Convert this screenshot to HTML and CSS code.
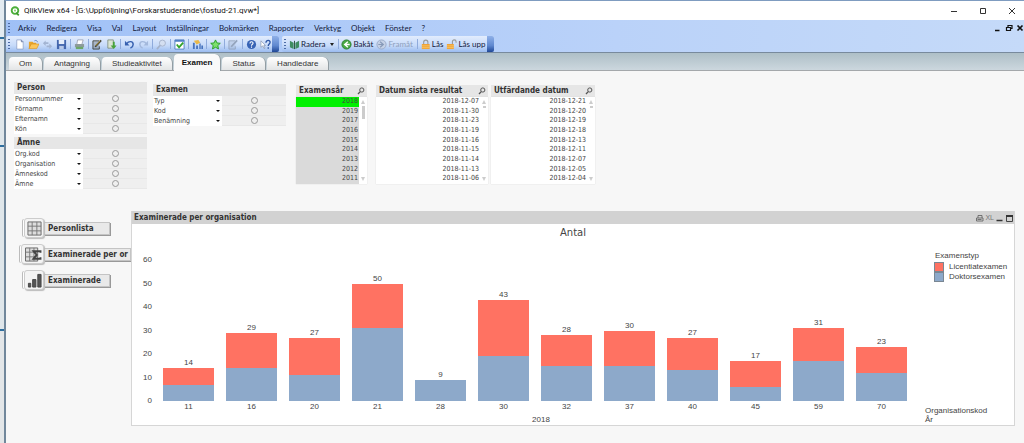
FILE: index.html
```html
<!DOCTYPE html>
<html lang="sv">
<head>
<meta charset="utf-8">
<title>QlikView x64</title>
<link rel="stylesheet" href="styles.css">
</head>
<body>
<svg class="defs" aria-hidden="true">
  <symbol id="mag" viewBox="0 0 8 8"><circle cx="4.8" cy="3" r="2.1" fill="none" stroke="#555" stroke-width="1"/><path d="M3.3 4.6L1 7" stroke="#555" stroke-width="1.3"/></symbol>
  <symbol id="sheet" viewBox="0 0 12 12"><path d="M3 1h5l2 2v8H3z" fill="#fff" stroke="#8a9cc4" stroke-width=".8"/><path d="M8 1v2h2" fill="#dbe4f5" stroke="#4f6396" stroke-width=".8"/></symbol>
  <symbol id="pencil" viewBox="0 0 12 12"><path d="M1 2h7v9H1z" fill="currentColor" opacity=".25"/><path d="M1 2h7M1 2v9h7V8" fill="none" stroke="currentColor" stroke-width=".9"/><path d="M3.5 8.5L10 1.5" stroke="currentColor" stroke-width="1.8"/></symbol>
  <symbol id="undo" viewBox="0 0 12 12"><path d="M3 5c2-3 7-3 7 1 0 2-1 3-3 4" fill="none" stroke="currentColor" stroke-width="1.6"/><path d="M1 2v5h5z" fill="currentColor"/></symbol>
  <symbol id="lock" viewBox="0 0 12 12"><path d="M4 6V3.5a2.3 2.3 0 0 1 4.600 0V6" fill="none" stroke="#9a9a9a" stroke-width="1.2"/><rect x="2" y="5.500" width="8.500" height="5.500" fill="#f0a030"/><path d="M2 7.500h8.500M2 9.500h8.500" stroke="#fbd27a" stroke-width=".8"/></symbol>
</svg>
<div class="desktop">
<div class="app">
  <header class="titlebar">
    <svg class="logo" viewBox="0 0 12 12"><circle cx="6" cy="5.500" r="4" fill="#fff" stroke="#4caf3a" stroke-width="2.200"/><circle cx="6" cy="5.500" r="1.300" fill="#8dcf7c"/><path d="M7.500 8l3 3.300" stroke="#3d9a30" stroke-width="2"/></svg>
    <h1>QlikView x64 - [G:\Uppföljning\Forskarstuderande\fostud-21.qvw*]</h1>
    <div class="winbtns">
      <button aria-label="Minimera"><svg viewBox="0 0 8 8"><path d="M1 4.500h6" stroke="#333"/></svg></button>
      <button aria-label="Maximera"><svg viewBox="0 0 8 8"><path d="M1.500 1.500h5v5h-5z" fill="none" stroke="#333"/></svg></button>
      <button aria-label="Stäng"><svg viewBox="0 0 8 8"><path d="M1 1l6 6M7 1l-6 6" stroke="#333"/></svg></button>
    </div>
  </header>
  <div class="commands">
    <nav class="menubar">
      <span class="grip"></span>
      <button>Arkiv</button><button>Redigera</button><button>Visa</button><button>Val</button><button>Layout</button><button>Inställningar</button><button>Bokmärken</button><button>Rapporter</button><button>Verktyg</button><button>Objekt</button><button>Fönster</button><button>?</button>
      <div class="docbtns">
        <button aria-label="Minimera dokument"><svg viewBox="0 0 8 8"><path d="M1 6.500h4.500" stroke="#111" stroke-width="1.500"/></svg></button>
        <button aria-label="Återställ dokument"><svg viewBox="0 0 8 8"><path d="M3 3V1.500h4v3H5.500M1.500 3.500h4v3h-4z" fill="none" stroke="#111" stroke-width="1.200"/></svg></button>
        <button aria-label="Stäng dokument"><svg viewBox="0 0 8 8"><path d="M1.500 1.500l5 5M6.500 1.500l-5 5" stroke="#111" stroke-width="1.700"/></svg></button>
      </div>
    </nav>
    <div class="toolbars">
      <div class="toolbar">
        <span class="grip"></span>
        <button aria-label="Ny"><svg viewBox="0 0 12 12"><use href="#sheet"/></svg></button>
        <button aria-label="Öppna"><svg viewBox="0 0 12 12"><path d="M1 10V3h4l1 1h3v2" fill="#e9a52c"/><path d="M1 10.500L3.500 5.500H12L9.500 10.500z" fill="#fbc65a" stroke="#d38a16" stroke-width=".6"/><path d="M7 2c2-1 3 0 3.500 1.500" stroke="#5d7fc0" fill="none"/></svg></button>
        <button aria-label="Uppdatera"><svg viewBox="0 0 12 12"><path d="M1 4.500l3-3v2h3v2H4v2zM11 8l-3 3V9H5V7h3V5z" fill="#a3b4d2"/></svg></button>
        <button aria-label="Spara"><svg viewBox="0 0 12 12"><path d="M1 1h10v10H1z" fill="#4467ae"/><path d="M3 1h6v4.500H3z" fill="#e6eefb"/><path d="M3.500 7.500h5V11h-5z" fill="#b8c9e8"/></svg></button>
        <i class="sep"></i>
        <button aria-label="Skriv ut"><svg viewBox="0 0 12 12"><path d="M4 1h6L8.500 6H3z" fill="#fff" stroke="#778" stroke-width=".6"/><path d="M1 5.500h10V9H1z" fill="#8d9a9c"/><path d="M2 8.500h8v2.500H2z" fill="#6da867"/></svg></button>
        <i class="sep"></i>
        <button class="dark" aria-label="Redigera skript"><svg viewBox="0 0 12 12"><use href="#pencil"/><path d="M4 7.500L9 2" stroke="#d9b03c" stroke-width=".8"/></svg></button>
        <button aria-label="Ladda om"><svg viewBox="0 0 12 12"><path d="M2 1h6v9H2z" fill="#d9e4d2" stroke="#71816c" stroke-width=".8"/><path d="M7.500 3h2v4h2L8.500 11 5 7h2.500z" fill="#47a239"/></svg></button>
        <i class="sep"></i>
        <button class="blue" aria-label="Ångra"><svg viewBox="0 0 12 12"><use href="#undo"/></svg></button>
        <button class="pale" aria-label="Gör om"><svg viewBox="0 0 12 12"><g transform="translate(12 0) scale(-1 1)"><use href="#undo"/></g></svg></button>
        <i class="sep"></i>
        <button aria-label="Sök"><svg viewBox="0 0 12 12"><circle cx="7" cy="4.500" r="3.300" fill="#d4dff1" stroke="#a5b2ca"/><path d="M4.500 7L1 11" stroke="#a5b2ca" stroke-width="1.800"/></svg></button>
        <i class="sep"></i>
        <button aria-label="Aktuella val"><svg viewBox="0 0 12 12"><path d="M1 1h10v10H1z" fill="#fff" stroke="#4f7fc5"/><path d="M1 1h10v2H1z" fill="#4f7fc5"/><path d="M3 6l2.500 3L10 4" fill="none" stroke="#32a32a" stroke-width="2"/></svg></button>
        <i class="sep"></i>
        <button aria-label="Diagram"><svg viewBox="0 0 12 12"><path d="M1 4h2v7H1zM4.500 7h2v4h-2zM8 5h1.500v6H8zM10.200 7H12v4h-1.800z" fill="#4773bd"/><path d="M2 2l5-1 2 3-4 2z" fill="#e9b848"/></svg></button>
        <i class="sep"></i>
        <button aria-label="Bokmärke"><svg viewBox="0 0 12 12"><path d="M6 1l1.600 3.300 3.600.4-2.700 2.500.8 3.600L6 9l-3.300 1.800.8-3.600L.8 4.700l3.600-.4z" fill="#7de06c" stroke="#239c22" stroke-width="1"/></svg></button>
        <i class="sep"></i>
        <button class="grey" aria-label="Anteckning"><svg viewBox="0 0 12 12"><use href="#pencil"/></svg></button>
        <i class="sep"></i>
        <button aria-label="Hjälp"><svg viewBox="0 0 12 12"><circle cx="6" cy="6" r="5" fill="#3763b5"/><path d="M4.300 4.800c0-2.400 3.500-2.200 3.400-.2C7.600 5.800 6 5.800 6 7.300M6 8.200v1.300" fill="none" stroke="#fff" stroke-width="1.200"/></svg></button>
        <button aria-label="Förklaring"><svg viewBox="0 0 12 12"><path d="M1 2v7l2-1.500 1.500 3 1-.5-1.300-3H6z" fill="#fff" stroke="#7a8aa8" stroke-width=".7"/><path d="M6.500 4c0-3.500 5-3 4.500-.2C10.800 5.500 9 5.500 9 7.500M9 9v1.500" fill="none" stroke="#2f57a5" stroke-width="1.500"/></svg></button>
        <span class="cap"></span>
      </div>
      <div class="toolbar">
        <span class="grip"></span>
        <button class="cmd"><svg viewBox="0 0 12 12"><path d="M1 2l4 2v7L1 9zM11 2L7 4v7l4-2z" fill="#3f8d62"/><path d="M6 2v9" stroke="#244a38"/></svg>Radera<span class="drop"></span></button>
        <i class="sep"></i>
        <button class="cmd"><svg viewBox="0 0 12 12"><circle cx="6" cy="6" r="5" fill="#46a843" stroke="#2c7f33"/><path d="M7.500 3L4 6l3.500 3M4 6h5.500" fill="none" stroke="#fff" stroke-width="1.500"/></svg>Bakåt</button>
        <button class="cmd" disabled><svg viewBox="0 0 12 12"><circle cx="6" cy="6" r="5" fill="#c5d1e6" stroke="#9aabc8"/><path d="M4.500 3L8 6 4.500 9M8 6H2.500" fill="none" stroke="#8799b8" stroke-width="1.300"/></svg>Framåt</button>
        <i class="sep"></i>
        <button class="cmd"><svg viewBox="0 0 12 12"><use href="#lock"/></svg>Lås</button>
        <button class="cmd"><svg viewBox="0 0 12 12"><rect x="1" y="5.500" width="7.500" height="5.500" fill="#f0a030"/><path d="M1 7.500h7.500M1 9.500h7.500" stroke="#fbd27a" stroke-width=".8"/><path d="M7 5.500V3a2 2 0 0 1 4 0v1" fill="none" stroke="#999" stroke-width="1.200"/></svg>Lås upp</button>
        <span class="cap"></span>
      </div>
    </div>
  </div>
  <nav class="tabs">
    <button>Om</button><button>Antagning</button><button>Studieaktivitet</button><button class="active">Examen</button><button>Status</button><button>Handledare</button>
  </nav>
  <main class="sheet">
    <div class="filters">
      <div class="stack">
        <section class="multi">
          <h2>Person</h2>
          <div class="fields">
            <button>Personnummer</button><span></span>
            <button>Förnamn</button><span></span>
            <button>Efternamn</button><span></span>
            <button>Kön</button><span></span>
          </div>
        </section>
        <section class="multi">
          <h2>Ämne</h2>
          <div class="fields">
            <button>Org.kod</button><span></span>
            <button>Organisation</button><span></span>
            <button>Ämneskod</button><span></span>
            <button>Ämne</button><span></span>
          </div>
        </section>
      </div>
      <section class="multi exam">
        <h2>Examen</h2>
        <div class="fields">
          <button>Typ</button><span></span>
          <button>Kod</button><span></span>
          <button>Benämning</button><span></span>
        </div>
      </section>
      <section class="listbox year">
        <h2>Examensår<svg><use href="#mag"/></svg></h2>
        <div class="scroll">
          <ul><li class="on">2018</li><li>2019</li><li>2017</li><li>2016</li><li>2015</li><li>2014</li><li>2013</li><li>2012</li><li>2011</li></ul>
          <div class="bar"><i class="up"></i><i class="thumb"></i><i class="down"></i></div>
        </div>
      </section>
      <section class="listbox result">
        <h2>Datum sista resultat<svg><use href="#mag"/></svg></h2>
        <div class="scroll">
          <ul><li>2018-12-07</li><li>2018-11-30</li><li>2018-11-23</li><li>2018-11-19</li><li>2018-11-16</li><li>2018-11-15</li><li>2018-11-14</li><li>2018-11-13</li><li>2018-11-06</li></ul>
          <div class="bar"><i class="up"></i><i class="thumb small"></i><i class="down"></i></div>
        </div>
      </section>
      <section class="listbox issued">
        <h2>Utfärdande datum<svg><use href="#mag"/></svg></h2>
        <div class="scroll">
          <ul><li>2018-12-21</li><li>2018-12-20</li><li>2018-12-19</li><li>2018-12-18</li><li>2018-12-13</li><li>2018-12-11</li><li>2018-12-07</li><li>2018-12-05</li><li>2018-12-04</li></ul>
          <div class="bar"><i class="up"></i><i class="thumb small"></i><i class="down"></i></div>
        </div>
      </section>
    </div>
    <div class="report">
      <nav class="views">
        <button><span class="tile"><svg viewBox="0 0 16 16"><path d="M1 1h14v14H1z" fill="#ddd" stroke="#666"/><path d="M1 5.500h14M1 10.500h14M5.500 1v14M10.500 1v14" stroke="#777"/></svg></span><span class="name">Personlista</span></button>
        <button class="long"><span class="tile"><svg class="wide" viewBox="0 0 18 16"><path d="M1 1h13v14H1z" fill="#ddd" stroke="#666"/><path d="M1 5.500h13M1 10.500h13M5.500 1v14M10 1v14" stroke="#777"/><path d="M17 6V4.500H9.500L13 8.500l-3.500 4H17V11" fill="none" stroke="#444" stroke-width="2"/></svg></span><span class="name">Examinerade per or</span></button>
        <button><span class="tile"><svg viewBox="0 0 16 16"><path d="M1.500 11h2.500v4H1.500zM6 7h3.500v8H6zM11.500 1.500H15V15h-3.500z" fill="#555" stroke="#444"/></svg></span><span class="name">Examinerade</span></button>
      </nav>
      <section class="chart">
        <header class="caption">
          <h2>Examinerade per organisation</h2>
          <button aria-label="Skriv ut diagram"><svg viewBox="0 0 8 8"><path d="M2.500 4V1.500h4V4M1 4h6.500v3H1zM2 5.500h4" fill="none" stroke="#666" stroke-width=".9"/></svg></button>
          <button class="xl">XL</button>
          <button aria-label="Minimera diagram"><svg viewBox="0 0 8 8"><path d="M1 6.500h6" stroke="#333" stroke-width="1.500"/></svg></button>
          <button aria-label="Maximera diagram"><svg viewBox="0 0 8 8"><path d="M1 1.500h6v6H1z" fill="none" stroke="#444"/><path d="M.5 2h7" stroke="#333" stroke-width="2"/></svg></button>
        </header>
        <h3>Antal</h3>
        <div class="plot">
          <div class="yaxis"><span>60</span><span>50</span><span>40</span><span>30</span><span>20</span><span>10</span><span>0</span></div>
          <div class="bars">
            <div class="col"><b>14</b><i class="lic" style="--v:7"></i><i class="dok" style="--v:7"></i></div>
            <div class="col"><b>29</b><i class="lic" style="--v:15"></i><i class="dok" style="--v:14"></i></div>
            <div class="col"><b>27</b><i class="lic" style="--v:16"></i><i class="dok" style="--v:11"></i></div>
            <div class="col"><b>50</b><i class="lic" style="--v:19"></i><i class="dok" style="--v:31"></i></div>
            <div class="col"><b>9</b><i class="dok" style="--v:9"></i></div>
            <div class="col"><b>43</b><i class="lic" style="--v:24"></i><i class="dok" style="--v:19"></i></div>
            <div class="col"><b>28</b><i class="lic" style="--v:13"></i><i class="dok" style="--v:15"></i></div>
            <div class="col"><b>30</b><i class="lic" style="--v:15"></i><i class="dok" style="--v:15"></i></div>
            <div class="col"><b>27</b><i class="lic" style="--v:14"></i><i class="dok" style="--v:13"></i></div>
            <div class="col"><b>17</b><i class="lic" style="--v:11"></i><i class="dok" style="--v:6"></i></div>
            <div class="col"><b>31</b><i class="lic" style="--v:14"></i><i class="dok" style="--v:17"></i></div>
            <div class="col"><b>23</b><i class="lic" style="--v:11"></i><i class="dok" style="--v:12"></i></div>
          </div>
          <div class="legend">
            <h4>Examenstyp</h4>
            <p><i class="lic"></i>Licentiatexamen</p>
            <p><i class="dok"></i>Doktorsexamen</p>
          </div>
          <div class="xaxis"><span>11</span><span>16</span><span>20</span><span>21</span><span>28</span><span>30</span><span>32</span><span>37</span><span>40</span><span>45</span><span>59</span><span>70</span></div>
          <div class="period">2018</div>
          <div class="dims">Organisationskod<br>År</div>
        </div>
      </section>
    </div>
  </main>
</div>
</div>
</body>
</html>
```
FILE: styles.css
```css
* { box-sizing: border-box; margin: 0; padding: 0; }
body { font: 8px/10px "Liberation Sans", Arial, sans-serif; color: #444; background: #f7f7f7; }
button { font: inherit; color: inherit; background: none; border: 0; white-space: nowrap; }
ul { list-style: none; }
svg { display: block; flex: none; }
.defs { display: none; }

.desktop { min-height: 100vh; display: flex; padding-left: 4px; background: linear-gradient(#e3ebf1 37px, #2f6f9f 37px 39px, #dfe6ea 39px 145px, #2f6f9f 145px 147px, #dfe6ea 147px 329px, #2f6f9f 329px 331px, #e3e6e8 331px); }
.app { flex: 1; min-width: 0; display: flex; flex-direction: column; border-left: 2px solid #71879b; border-top: 1px solid #7f9cc0; background: #f7f7f7; }

.titlebar { height: 19px; display: flex; align-items: center; background: #fff; color: #111; font-family: Roboto, sans-serif; padding-left: 4px; }
.logo { width: 10px; height: 10px; margin-right: 4px; }
.titlebar h1 { font-size: 8px; font-weight: 400; }
.winbtns { margin-left: auto; display: flex; }
.winbtns button { width: 29px; padding-left: 4px; display: flex; justify-content: center; }
.winbtns svg { width: 8px; height: 8px; }

.commands { background: linear-gradient(90deg, #9fc0f6, #a9c7f8 20%, #bad2f9 60%, #c5daf9); color: #14203c; border-bottom: 1px solid #788a9d; font-family: Lato, sans-serif; }
.menubar { height: 16px; display: flex; align-items: center; gap: 10px; padding-left: 2px; }
.menubar .grip { margin-right: -2px; }
.grip { width: 2px; height: 10px; flex: none; background: repeating-linear-gradient(#4d6ca6 0 1px, transparent 1px 3px); }
.docbtns { margin-left: auto; display: flex; gap: 3px; }
.docbtns svg { width: 8px; height: 8px; }

.toolbars { display: flex; gap: 3px; height: 16px; }
.toolbar { display: flex; align-items: center; padding-left: 2px; background: linear-gradient(#e2ecfd, #c6daf9 60%, #9bbcf0); border-radius: 2px; }
.toolbar .grip { margin-right: 2px; }
.toolbar button { width: 14px; height: 14px; display: flex; align-items: center; justify-content: center; }
.toolbar svg { width: 11px; height: 11px; }
.toolbar .cmd { width: auto; gap: 1px; padding: 0 2px 0 1px; }
.toolbar .cmd:disabled { color: #8fa0bd; }
.sep { width: 1px; height: 10px; margin: 0 1px 0 2px; background: #8fabdc; flex: none; }
.cap { width: 7px; align-self: stretch; border-radius: 0 2px 2px 0; background: linear-gradient(#8fb0e8, #5f88cf 60%, #1f4796); }
.drop { border: 2px solid transparent; border-top: 3px solid #222; border-bottom: 0; margin-left: 4px; }
.dark { color: #3c3c30; }
.blue { color: #3761b0; }
.pale { color: #a3b8dc; }
.grey { color: #93a3bb; }

.tabs { height: 18px; display: flex; align-items: flex-end; gap: 1px; padding-left: 3px; background: linear-gradient(#aebfc7, #ccd7de); border-bottom: 1px solid #a4a8ab; color: #333; }
.tabs button { height: 13px; padding: 0 10px; border-radius: 4px 6px 0 0; background: linear-gradient(#fff, #e3e5e6); border-right: 1px solid #929da3; }
.tabs .active { height: 17px; margin-bottom: -1px; padding: 0 8px; font-weight: 700; color: #111; background: #f9f9f9; }

.sheet { flex: 1; font-family: "DejaVu Sans Condensed", "DejaVu Sans", sans-serif; }
.filters { display: flex; align-items: flex-start; padding: 11px 8px 0; font-size: 7px; height: 140px; }
.filters h2, .views, .caption h2 { font-size: 8px; font-weight: 700; color: #333; }
.filters h2 { height: 12px; line-height: 12px; padding: 0 3px; background: #e6e6e6; display: flex; align-items: center; justify-content: space-between; white-space: nowrap; }
.filters h2 svg { width: 8px; height: 8px; margin-right: -1px; }
.stack { display: grid; gap: 3px; }
.multi { width: 133px; }
.exam { margin: 2px 10px 0 6px; }
.fields { display: grid; grid-template-columns: 69px 1fr; grid-auto-rows: 10px; }
.fields button { background: #fff; text-align: left; padding: 0 2px 0 1px; display: flex; align-items: center; justify-content: space-between; }
.fields button::after { content: ""; border: 2px solid transparent; border-top: 2px solid #111; border-bottom: 0; }
.fields span { background: #efefef; border-bottom: 1px solid #e8e8e8; display: flex; align-items: center; justify-content: center; }
.fields span::after { content: ""; width: 5px; height: 5px; border: 1px solid #999; border-radius: 50%; }
.listbox { margin-top: 3px; }
.scroll { display: flex; height: 87px; background: #fff; box-shadow: 0 0 1px #ccc; }
.scroll ul { flex: 1; display: grid; grid-auto-rows: 1fr; line-height: 9px; text-align: right; }
.scroll li { padding-right: 1px; }
.bar { width: 8px; padding: 3px 0; display: flex; flex-direction: column; align-items: center; }
.up, .down { border: 2px solid transparent; }
.up { border-bottom: 4px solid #ccc; border-top: 0; }
.down { border-top: 4px solid #ccc; border-bottom: 0; margin-top: auto; }
.thumb { width: 3px; height: 13px; margin-top: 2px; background: #ccc; }
.thumb.small { height: 2px; }
.year { width: 71px; }
.year ul { background: #dadada; }
.on { background: #00f000; }
.result { width: 112px; margin-left: 9px; }
.issued { width: 104px; margin-left: 3px; }

.report { display: flex; padding-right: 9px; }
.views { width: 125px; overflow: hidden; padding-top: 7px; display: flex; flex-direction: column; align-items: flex-start; gap: 6px; }
.views button { display: flex; align-items: center; height: 20px; padding-left: 15px; }
.tile { width: 20px; height: 20px; border: 1px solid #ccc; border-radius: 3px; background: #f4f4f4; box-shadow: -2px 0 0 -1px #fff, -3px 0 0 -1px #bbb, 1px 1px 1px #bbb; display: flex; align-items: center; justify-content: center; z-index: 1; margin-left: 3px; }
.tile svg { width: 15px; height: 15px; }
.views .long { width: 100%; padding-left: 12px; }
.long .tile { width: 23px; }
.long .name { flex: 1; }
.tile .wide { width: 18px; }
.name { min-width: 66px; height: 13px; line-height: 11px; padding: 0 0 0 4px; text-align: left; border: 1px solid #c4c4c4; border-left: 0; background: #e9e9e9; box-shadow: 1px 1px 0 #999; }

.chart { flex: 1; min-width: 0; background: #fff; border: 1px solid #d6d6d6; border-top: 0; font-family: "Liberation Sans", Arial, sans-serif; }
.caption { height: 13px; background: #d2d2d2; display: flex; align-items: center; gap: 1px; padding: 0 0 0 2px; }
.caption h2 { flex: 1; font-family: "DejaVu Sans Condensed", "DejaVu Sans", sans-serif; }
.caption svg { width: 9px; height: 8px; }
.xl { color: #777; font-size: 7px; }
.chart h3 { font: 400 10px/18px "DejaVu Sans", sans-serif; text-align: center; }
.plot { display: grid; grid-template-columns: 31px 1fr 107px; grid-template-rows: 141px auto 13px; padding-top: 18px; }
.yaxis { display: flex; flex-direction: column; justify-content: space-between; text-align: right; margin: -5px 11px -5px 0; }
.bars, .xaxis { display: grid; grid-template-columns: repeat(12, 1fr); column-gap: 12px; text-align: center; }
.col { display: flex; flex-direction: column; justify-content: flex-end; height: 141px; }
.col b { font-weight: 400; }
.col i { flex: none; height: calc(var(--v) / 60 * 100%); }
.lic { background: #ff7262; }
.dok { background: #8da9ca; }
.legend { padding-left: 27px; margin-top: -9px; }
.legend h4 { font-weight: 400; padding: 0 1px 1px; }
.legend p { display: flex; align-items: center; gap: 5px; }
.legend i { width: 10px; height: 10px; border: 1px solid #7a8793; }
.xaxis { grid-column: 2; padding-top: 1px; }
.period { grid-area: 3 / 2; padding: 3px 0 0 12px; text-align: center; }
.dims { grid-area: 2 / 3 / 4 / 4; padding: 5px 0 0 18px; line-height: 9px; }
```
